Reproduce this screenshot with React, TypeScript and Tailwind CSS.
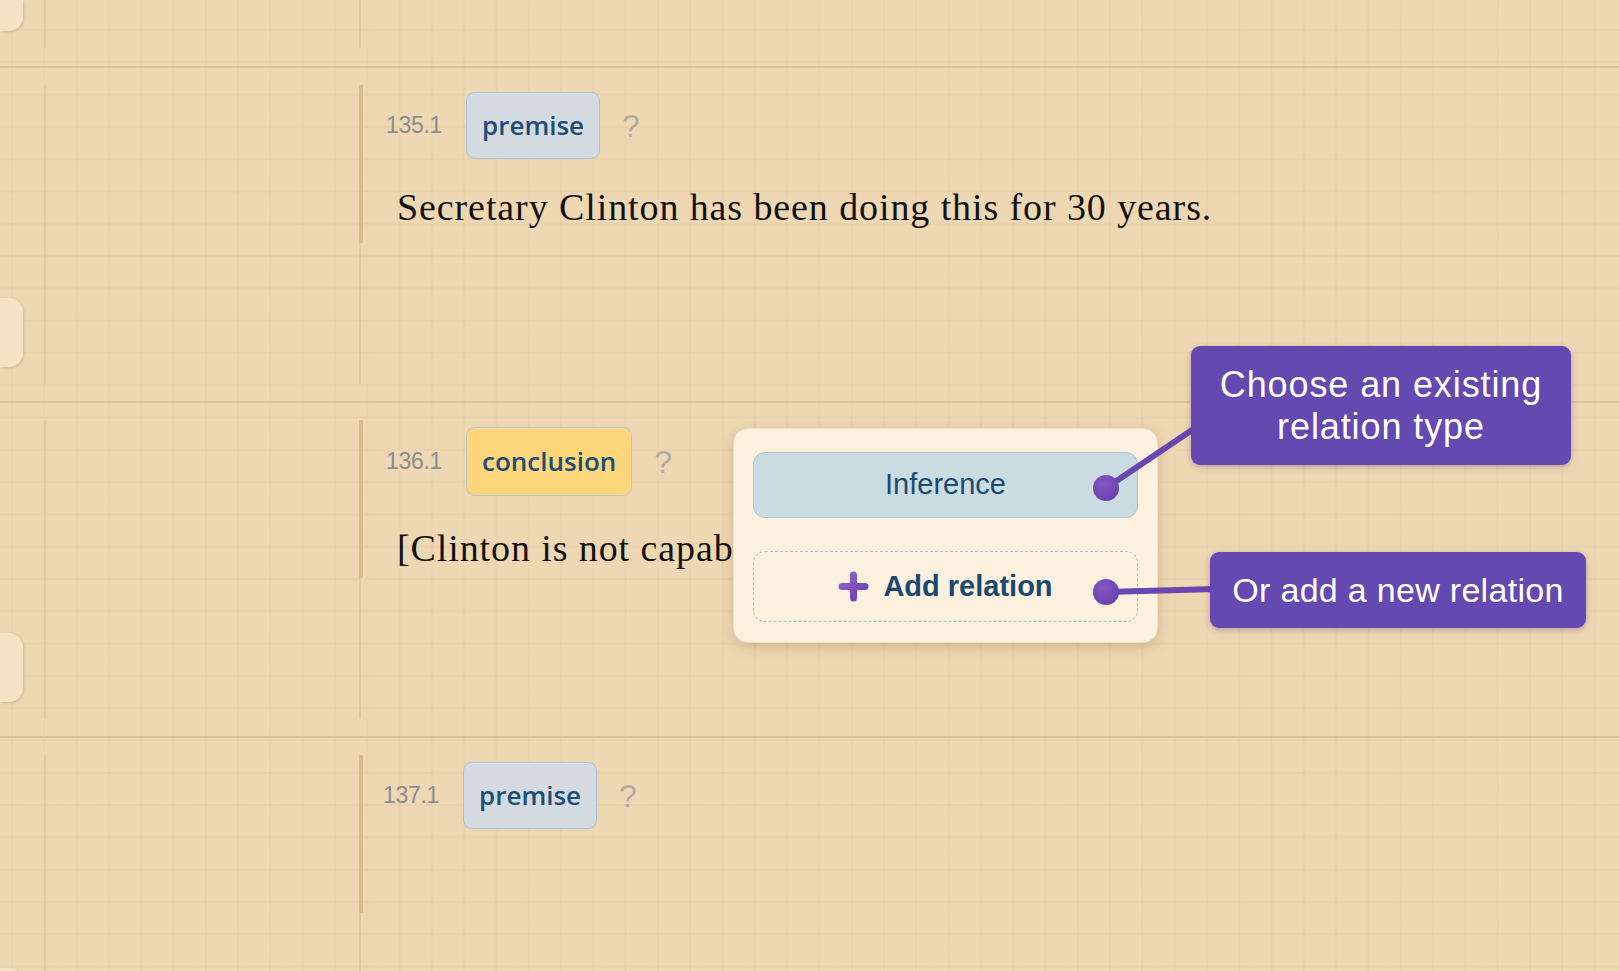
import React from "react";

type Kind = "premise" | "conclusion";

function Badge({ label, kind }: { label: string; kind: Kind }) {
  const cls =
    kind === "premise"
      ? "h-[67px] bg-[#d3dbe1] border-[#a8c3d9]"
      : "h-[69px] bg-[#fdd67b] border-[#b7c3cc]";
  return (
    <div
      className={`flex items-center rounded-[9px] border-[1.5px] px-[15px] font-['Open_Sans',sans-serif] text-[26px] font-semibold text-[#1e4d75] shadow-[inset_0_1px_0_rgba(255,255,255,0.35)] ${cls}`}
    >
      {label}
    </div>
  );
}

function Row({
  num,
  label,
  kind,
  text,
  shift = false,
}: {
  num: string;
  label: string;
  kind: Kind;
  text?: string;
  shift?: boolean;
}) {
  return (
    <div className="flex h-[335px] shrink-0 border-b-2 border-[#dbc196]">
      <div className="flex w-[44px] flex-col pt-[230px]">
        <div className="h-[69px] w-[23px] rounded-r-[14px] bg-[#f6e2c4] shadow-[1px_1px_3px_rgba(150,110,60,0.3)]" />
      </div>
      <div className="my-[17px] w-[2px] bg-[#e2cba4]" />
      <div className="w-[313px]" />
      <div className="flex w-[5px] flex-col py-[17px]">
        <div className="h-[158px] w-[4px] bg-[#d6bc90]" />
        <div className="w-[2px] flex-1 bg-[#e0c9a2]" />
      </div>
      <div className={`flex flex-col pt-[24px] ${shift ? "pl-[19px]" : "pl-[22px]"}`}>
        <div className="flex items-center">
          <span className="w-[80px] font-['Liberation_Sans',Arial,sans-serif] text-[23px] tracking-[-0.3px] text-[#8a8d90]">
            {num}
          </span>
          <Badge label={label} kind={kind} />
          <span className="ml-[22px] font-['Liberation_Sans',Arial,sans-serif] text-[32px] text-[#b3aa9c]">
            ?
          </span>
        </div>
        {text && (
          <p
            className={`${kind === "premise" ? "mt-[29px]" : "mt-[33px]"} ml-[11px] whitespace-nowrap font-['Liberation_Serif','Times_New_Roman',serif] text-[38px] leading-none tracking-[0.9px] text-[#141210]`}
          >
            {text}
          </p>
        )}
      </div>
    </div>
  );
}

function PlusIcon() {
  return (
    <svg width="31" height="31" viewBox="0 0 31 31">
      <defs>
        <linearGradient id="pg" x1="0" y1="0" x2="1" y2="1">
          <stop offset="0" stopColor="#9366cc" />
          <stop offset="1" stopColor="#6a3da8" />
        </linearGradient>
      </defs>
      <path d="M15.5 4 V27 M4 15.5 H27" stroke="url(#pg)" strokeWidth="7" strokeLinecap="round" fill="none" />
    </svg>
  );
}

export default function App() {
  return (
    <div className="relative h-[971px] w-[1619px] overflow-hidden bg-[#eed8b4] bg-[linear-gradient(to_right,rgba(180,140,80,0.07)_1.5px,transparent_1.5px),linear-gradient(to_bottom,rgba(180,140,80,0.07)_1.5px,transparent_1.5px)] bg-[size:32.3px_32.3px] bg-[position:11px_29px]">
      <div className="flex flex-col">
        {/* partial top row */}
        <div className="flex h-[68px] shrink-0 border-b-2 border-[#dbc196]">
          <div className="w-[44px]">
            <div className="h-[31px] w-[23px] rounded-br-[14px] bg-[#f6e2c4] shadow-[1px_1px_3px_rgba(150,110,60,0.3)]" />
          </div>
          <div className="h-[48px] w-[2px] bg-[#e2cba4]" />
          <div className="w-[313px]" />
          <div className="h-[48px] w-[2px] bg-[#e0c9a2]" />
        </div>
        <Row
          num="135.1"
          label="premise"
          kind="premise"
          text="Secretary Clinton has been doing this for 30 years."
        />
        <Row
          num="136.1"
          label="conclusion"
          kind="conclusion"
          text="[Clinton is not capable of fixing this.]"
        />
        <Row num="137.1" label="premise" kind="premise" shift />
      </div>

      {/* relation popup */}
      <div className="absolute left-[733px] top-[428px] flex h-[215px] w-[425px] flex-col gap-[33px] rounded-[15px] border border-[#efe0c6] bg-[#fcf1df] px-[19px] pb-[20px] pt-[23px] shadow-[0_4px_14px_rgba(130,90,40,0.28)]">
        <div className="flex h-[67px] items-center justify-center rounded-[12px] border-[1.5px] border-[#a9c4d8] bg-[#cadbe2] font-['Liberation_Sans',Arial,sans-serif] text-[29px] text-[#1d4a72]">
          Inference
        </div>
        <div className="flex h-[72px] items-center justify-center gap-[14px] rounded-[12px] border-[1.5px] border-dashed border-[#a8c2d6]">
          <PlusIcon />
          <span className="font-['Liberation_Sans',Arial,sans-serif] text-[29px] font-bold text-[#1b4870]">
            Add relation
          </span>
        </div>
      </div>

      {/* connectors */}
      <svg className="pointer-events-none absolute left-0 top-0" width="1619" height="971" viewBox="0 0 1619 971">
        <defs>
          <radialGradient id="dg" cx="0.38" cy="0.35" r="0.7">
            <stop offset="0" stopColor="#8559c2" />
            <stop offset="1" stopColor="#6a3fae" />
          </radialGradient>
        </defs>
        <line x1="1106" y1="488" x2="1198" y2="426" stroke="#6a47b0" strokeWidth="6" strokeLinecap="round" />
        <line x1="1106" y1="592" x2="1216" y2="589" stroke="#6a47b0" strokeWidth="6" strokeLinecap="round" />
        <circle cx="1106" cy="488" r="13" fill="url(#dg)" />
        <circle cx="1106" cy="592" r="13" fill="url(#dg)" />
      </svg>

      {/* callouts */}
      <div className="absolute left-[1191px] top-[346px] flex h-[119px] w-[380px] items-center justify-center rounded-[9px] bg-[#6449b1] text-center font-['Liberation_Sans',Arial,sans-serif] text-[36px] leading-[42px] tracking-[0.9px] text-white shadow-[0_2px_6px_rgba(60,30,100,0.3)]">
        Choose an existing
        <br />
        relation type
      </div>
      <div className="absolute left-[1210px] top-[552px] flex h-[76px] w-[376px] items-center justify-center rounded-[9px] bg-[#6449b1] text-center font-['Liberation_Sans',Arial,sans-serif] text-[34px] tracking-[0.3px] text-white shadow-[0_2px_6px_rgba(60,30,100,0.3)]">
        Or add a new relation
      </div>
    </div>
  );
}
